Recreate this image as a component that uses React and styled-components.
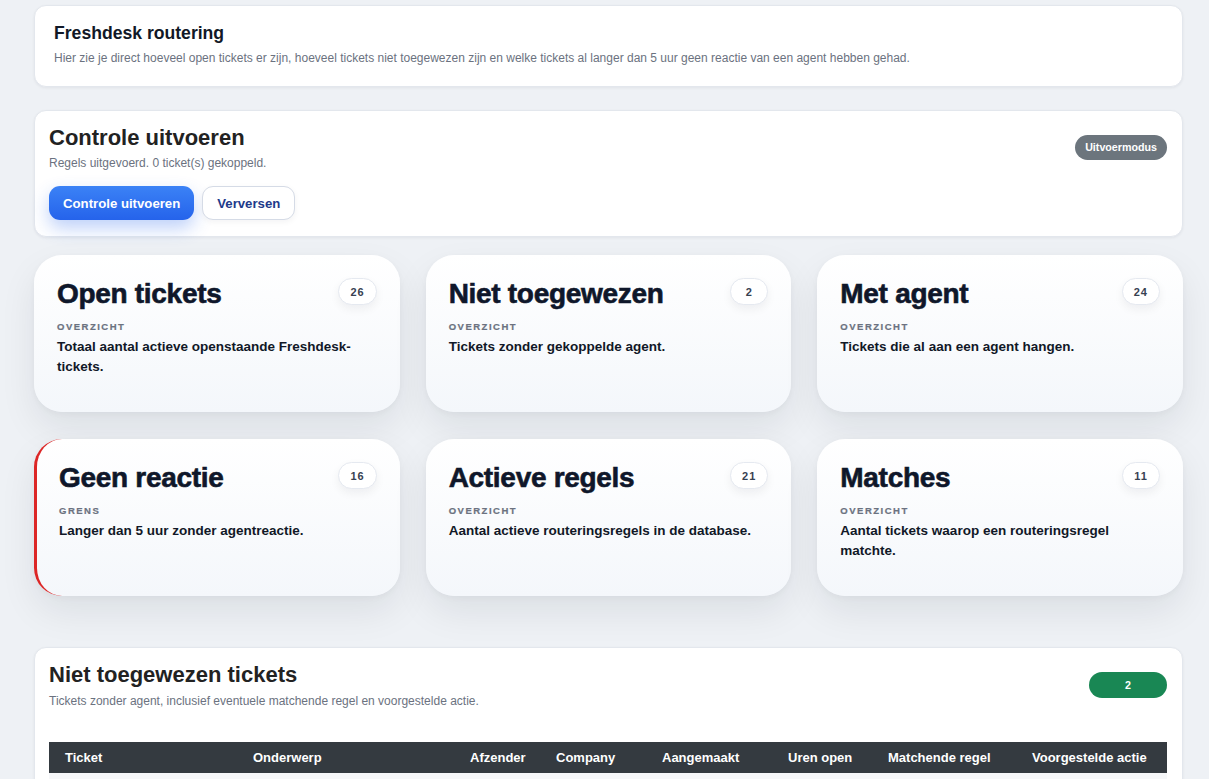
import React from "react";
import styled, { createGlobalStyle, css } from "styled-components";

const Global = createGlobalStyle`
  html, body { margin: 0; padding: 0; background: #eef1f5; }
  body { font-family: "Liberation Sans", Arial, sans-serif; color: #1f2937; }
  * { box-sizing: border-box; }
`;

const Page = styled.div`
  padding: 5px 26px 40px 34px;
  display: flex;
  flex-direction: column;
`;

const Panel = styled.section`
  background: #ffffff;
  border-radius: 12px;
  border: 1px solid #e3e7ed;
  box-shadow: 0 1px 3px rgba(15, 23, 42, 0.06);
  padding: ${(p) => p.$pad || "14px 15px 16px"};
  margin-bottom: ${(p) => p.$mb || "0"};
`;

const IntroTitle = styled.h1`
  margin: 0;
  font-size: 17.6px;
  line-height: 1.2;
  font-weight: 700;
  color: #111827;
`;

const IntroText = styled.p`
  margin: 7px 0 0;
  font-size: 12px;
  line-height: 1.2;
  color: #6b7280;
`;

const HeaderRow = styled.div`
  display: flex;
  align-items: center;
  justify-content: space-between;
`;

const SectionTitle = styled.h2`
  margin: 0;
  font-size: 22px;
  line-height: 1.2;
  font-weight: 700;
  color: #222;
`;

const SectionText = styled.p`
  margin: 5px 0 0;
  font-size: 12px;
  line-height: 1.2;
  color: #6b7280;
`;

const Pill = styled.span`
  display: inline-flex;
  align-items: center;
  justify-content: center;
  height: ${(p) => p.$h || "25px"};
  min-width: ${(p) => p.$w || "auto"};
  padding: 0 10px;
  border-radius: 999px;
  background: ${(p) => p.$bg};
  color: #fff;
  font-size: 10.7px;
  font-weight: 700;
`;

const Actions = styled.div`
  display: flex;
  gap: 8px;
  margin-top: 16px;
`;

const Button = styled.button`
  font-family: inherit;
  height: 34px;
  padding: 0 14px;
  border-radius: 11px;
  font-size: 13.2px;
  font-weight: 700;
  cursor: pointer;
  ${(p) =>
    p.$primary
      ? css`
          border: none;
          color: #fff;
          background: linear-gradient(180deg, #3b82f6 0%, #2563eb 100%);
          box-shadow: 0 8px 18px rgba(37, 99, 235, 0.3);
        `
      : css`
          border: 1px solid #d5dbe6;
          color: #1e3a8a;
          background: #fff;
          box-shadow: 0 2px 6px rgba(15, 23, 42, 0.05);
        `}
`;

const StatGrid = styled.div`
  display: grid;
  grid-template-columns: repeat(3, 1fr);
  column-gap: 26px;
  row-gap: 27px;
  margin: 18px 0 51px;
`;

const StatCard = styled.div`
  min-height: 157px;
  border-radius: 28px;
  background: linear-gradient(180deg, #ffffff 0%, #f4f7fb 100%);
  box-shadow: 0 16px 36px rgba(15, 23, 42, 0.08), 0 2px 6px rgba(15, 23, 42, 0.04);
  padding: 22px 23px 20px 23px;
  ${(p) =>
    p.$alert &&
    css`
      border-left: 3px solid #dc2626;
      padding-left: 22px;
    `}
`;

const StatHead = styled.div`
  display: flex;
  justify-content: space-between;
  align-items: flex-start;
`;

const StatTitle = styled.h3`
  margin: 0;
  font-size: 28px;
  line-height: 1.2;
  font-weight: 800;
  letter-spacing: -0.3px;
  color: #0f172a;
  -webkit-text-stroke: 0.6px #0f172a;
`;

const CountBadge = styled.span`
  margin-top: 1px;
  min-width: 38px;
  height: 27px;
  padding: 0 11px;
  display: inline-flex;
  align-items: center;
  justify-content: center;
  border-radius: 999px;
  background: #ffffff;
  border: 1px solid #e5e9f0;
  box-shadow: 0 4px 10px rgba(15, 23, 42, 0.06);
  font-size: 11px;
  font-weight: 700;
  letter-spacing: 1px;
  color: #374151;
`;

const StatLabel = styled.div`
  margin-top: 10px;
  font-size: 9.5px;
  line-height: 12px;
  font-weight: 800;
  letter-spacing: 1.5px;
  color: #6b7280;
  -webkit-text-stroke: 0.2px #6b7280;
  text-transform: uppercase;
`;

const StatText = styled.p`
  margin: 4px 0 0;
  font-size: 13.5px;
  line-height: 20px;
  font-weight: 700;
  color: #111827;
`;

const TableWrap = styled.div`
  margin-top: 34px;
`;

const Table = styled.table`
  width: 100%;
  border-collapse: collapse;
  table-layout: fixed;
`;

const Th = styled.th`
  background: #343a40;
  color: #fff;
  text-align: left;
  font-size: 13px;
  line-height: 15px;
  font-weight: 700;
  padding: 8px 16px;
  white-space: nowrap;
`;

const Td = styled.td`
  font-size: 12.5px;
  color: #212529;
  padding: 10px 16px;
  border-bottom: 1px solid #dee2e6;
  background: ${(p) => (p.$odd ? "#f6f7f9" : "#fff")};
  vertical-align: top;
`;

const stats = [
  { title: "Open tickets", count: 26, label: "Overzicht", text: "Totaal aantal actieve openstaande Freshdesk-tickets." },
  { title: "Niet toegewezen", count: 2, label: "Overzicht", text: "Tickets zonder gekoppelde agent." },
  { title: "Met agent", count: 24, label: "Overzicht", text: "Tickets die al aan een agent hangen." },
  { title: "Geen reactie", count: 16, label: "Grens", text: "Langer dan 5 uur zonder agentreactie.", alert: true },
  { title: "Actieve regels", count: 21, label: "Overzicht", text: "Aantal actieve routeringsregels in de database." },
  { title: "Matches", count: 11, label: "Overzicht", text: "Aantal tickets waarop een routeringsregel matchte." },
];

const columns = [
  ["Ticket", 188],
  ["Onderwerp", 217],
  ["Afzender", 86],
  ["Company", 106],
  ["Aangemaakt", 126],
  ["Uren open", 100],
  ["Matchende regel", 144],
  ["Voorgestelde actie", null],
];

const rows = [
  ["#48213", "Vraag over factuur", "klant@voorbeeld.nl", "Voorbeeld BV", "12-05 09:14", "6.2", "Facturatie", "Toewijzen aan Finance"],
  ["#48227", "Inloggen lukt niet", "info@bedrijf.nl", "Bedrijf NV", "12-05 10:02", "5.4", "—", "Geen actie"],
];

export default function App() {
  return (
    <>
      <Global />
      <Page>
        <Panel $pad="17px 19px 20px" $mb="23px">
          <IntroTitle>Freshdesk routering</IntroTitle>
          <IntroText>
            Hier zie je direct hoeveel open tickets er zijn, hoeveel tickets niet toegewezen zijn en welke tickets al langer dan 5 uur geen reactie van een agent hebben gehad.
          </IntroText>
        </Panel>

        <Panel $pad="14px 15px 16px 14px">
          <HeaderRow>
            <div>
              <SectionTitle>Controle uitvoeren</SectionTitle>
              <SectionText>Regels uitgevoerd. 0 ticket(s) gekoppeld.</SectionText>
            </div>
            <Pill $bg="#6c757d">Uitvoermodus</Pill>
          </HeaderRow>
          <Actions>
            <Button $primary>Controle uitvoeren</Button>
            <Button>Verversen</Button>
          </Actions>
        </Panel>

        <StatGrid>
          {stats.map((s) => (
            <StatCard key={s.title} $alert={s.alert}>
              <StatHead>
                <StatTitle>{s.title}</StatTitle>
                <CountBadge>{s.count}</CountBadge>
              </StatHead>
              <StatLabel>{s.label}</StatLabel>
              <StatText>{s.text}</StatText>
            </StatCard>
          ))}
        </StatGrid>

        <Panel $pad="14px 15px 16px 14px">
          <HeaderRow>
            <div>
              <SectionTitle>Niet toegewezen tickets</SectionTitle>
              <SectionText>Tickets zonder agent, inclusief eventuele matchende regel en voorgestelde actie.</SectionText>
            </div>
            <Pill $bg="#198754" $w="78px" $h="26px">2</Pill>
          </HeaderRow>
          <TableWrap>
            <Table>
              <colgroup>
                {columns.map(([name, w]) => (
                  <col key={name} style={w ? { width: w } : undefined} />
                ))}
              </colgroup>
              <thead>
                <tr>
                  {columns.map(([name]) => (
                    <Th key={name}>{name}</Th>
                  ))}
                </tr>
              </thead>
              <tbody>
                {rows.map((r, i) => (
                  <tr key={r[0]}>
                    {r.map((c, j) => (
                      <Td key={j} $odd={i % 2 === 0}>{c}</Td>
                    ))}
                  </tr>
                ))}
              </tbody>
            </Table>
          </TableWrap>
        </Panel>
      </Page>
    </>
  );
}
